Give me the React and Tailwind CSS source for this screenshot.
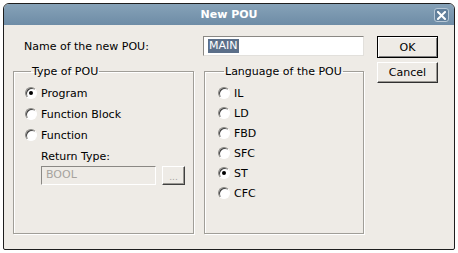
import React from "react";

const font = { fontFamily: '"DejaVu Sans", Verdana, sans-serif' };

function Radio({ checked, label }) {
  return (
    <div className="flex items-center h-5">
      <span className="relative w-3 h-3 rounded-full bg-white border border-t-[#8a8884] border-l-[#8a8884] border-b-white border-r-white shadow-[inset_1px_1px_0_#404040] flex items-center justify-center">
        {checked && <span className="w-1 h-1 rounded-full bg-black" />}
      </span>
      <span className="ml-1 text-[11px] text-black leading-none">{label}</span>
    </div>
  );
}

function Group({ title, className, children }) {
  return (
    <fieldset
      className={`border border-[#a09e98] shadow-[1px_1px_0_#ffffff,inset_1px_1px_0_#ffffff] ${className}`}
    >
      <legend className="ml-[6px] px-[1px] text-[11px] leading-none text-black">{title}</legend>
      {children}
    </fieldset>
  );
}

export default function App() {
  return (
    <div className="w-[458px] h-[253px] bg-white p-[3px]" style={font}>
      <div className="w-[452px] h-[247px] border border-[#1e1e1e] rounded-t-[6px] rounded-b-[2px] overflow-hidden bg-[#eeebe6] flex flex-col">
        <div className="h-[21px] bg-gradient-to-b from-[#86a2b8] to-[#6e8ca6] flex items-center relative">
          <div className="flex-1 text-center text-white font-bold text-[11px] leading-none">New POU</div>
          <div className="absolute right-[5px] top-[4px] w-[15px] h-[14px] rounded-[3px] border border-[#b8c8d6] bg-[#62809c] flex items-center justify-center">
            <svg width="9" height="9" viewBox="0 0 9 9">
              <path d="M1 1 L8 8 M8 1 L1 8" stroke="#ffffff" strokeWidth="2" strokeLinecap="square" />
            </svg>
          </div>
        </div>
        <div className="flex pl-[9px] pt-[11px]">
          <div className="w-[351px] flex flex-col">
            <div className="flex items-center h-[20px]">
              <span className="ml-[11px] text-[11px] leading-none text-black">Name of the new POU:</span>
              <div className="ml-auto w-[161px] h-[20px] bg-white border border-t-[#8a8884] border-l-[#8a8884] border-b-[#e2e0dc] border-r-[#e2e0dc] flex items-center pl-[4px]">
                <span className="bg-[#5b6f89] text-white text-[11px] leading-[14px] px-[1px]">MAIN</span>
              </div>
            </div>
            <div className="flex mt-[10px] gap-[10px]">
              <Group title="Type of POU" className="w-[181px] h-[168px] pl-[11px] pt-[6px]">
                <Radio checked label="Program" />
                <div className="mt-[1px]"><Radio label="Function Block" /></div>
                <div className="mt-[1px]"><Radio label="Function" /></div>
                <div className="ml-[16px] mt-[6px] text-[11px] leading-none text-black">Return Type:</div>
                <div className="ml-[16px] mt-[4px] flex gap-[6px]">
                  <div className="w-[115px] h-[19px] bg-[#eeebe6] border border-t-[#8a8884] border-l-[#8a8884] border-b-white border-r-white flex items-center pl-[4px] text-[11px] text-[#a6a39e]">BOOL</div>
                  <div className="w-[23px] h-[19px] border border-t-white border-l-white border-b-[#404040] border-r-[#404040] shadow-[inset_-1px_-1px_0_#9a9893] flex items-center justify-center text-[9px] text-[#a6a39e] leading-none pt-[3px]">...</div>
                </div>
              </Group>
              <Group title="Language of the POU" className="w-[160px] h-[168px] pl-[13px] pt-[6px]">
                <Radio label="IL" />
                <Radio label="LD" />
                <Radio label="FBD" />
                <Radio label="SFC" />
                <Radio checked label="ST" />
                <Radio label="CFC" />
              </Group>
            </div>
          </div>
          <div className="ml-[13px] flex flex-col gap-[4px]">
            <button className="w-[61px] h-[22px] border border-black bg-[#eeebe6] shadow-[inset_1px_1px_0_#ffffff,inset_-1px_-1px_0_#808080] text-[11px] text-black leading-none">OK</button>
            <button className="w-[61px] h-[21px] border border-t-white border-l-white border-b-[#303030] border-r-[#303030] bg-[#eeebe6] shadow-[inset_-1px_-1px_0_#9a9893] text-[11px] text-black leading-none">Cancel</button>
          </div>
        </div>
      </div>
    </div>
  );
}
